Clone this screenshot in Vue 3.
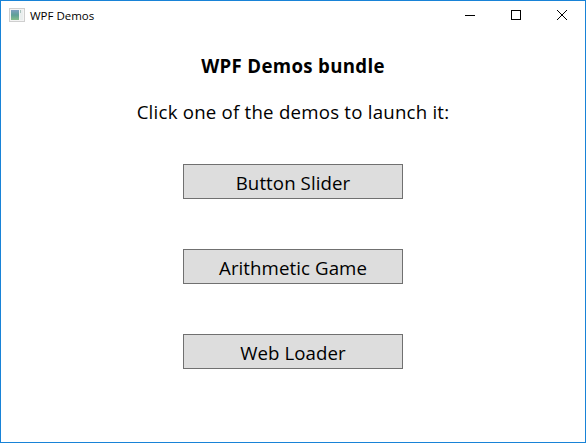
<script setup>
const demos = ['Button Slider', 'Arithmetic Game', 'Web Loader']
</script>

<template>
  <div class="window">
    <header class="titlebar">
      <svg class="app-icon" width="16" height="16" viewBox="0 0 16 16">
        <defs>
          <linearGradient id="pane" x1="0" y1="0" x2="0" y2="1">
            <stop offset="0" stop-color="#7f9fc0" />
            <stop offset="0.5" stop-color="#5f9f98" />
            <stop offset="1" stop-color="#86bd8a" />
          </linearGradient>
        </defs>
        <rect x="0.5" y="0.5" width="15" height="13" fill="#f4f4f4" stroke="#cfcfcf" />
        <rect x="2" y="2" width="8" height="10" fill="url(#pane)" />
        <rect x="11" y="2" width="3" height="10" fill="#e9eeee" />
        <rect x="11" y="2" width="1" height="3" fill="#a9c2bc" />
      </svg>
      <span class="title">WPF Demos</span>
      <div class="controls">
        <div class="control">
          <svg width="46" height="30" viewBox="0 0 46 30"><rect x="18" y="14" width="10" height="1" fill="#000" /></svg>
        </div>
        <div class="control">
          <svg width="46" height="30" viewBox="0 0 46 30"><rect x="18.5" y="9.5" width="9" height="9" fill="none" stroke="#000" /></svg>
        </div>
        <div class="control">
          <svg width="46" height="30" viewBox="0 0 46 30"><path d="M18 9 L28 19 M28 9 L18 19" stroke="#000" stroke-width="1" fill="none" /></svg>
        </div>
      </div>
    </header>
    <main class="content">
      <h1 class="heading">WPF Demos bundle</h1>
      <p class="sub">Click one of the demos to launch it:</p>
      <div class="buttons">
        <button v-for="d in demos" :key="d" class="demo" type="button">{{ d }}</button>
      </div>
    </main>
  </div>
</template>

<style>
html, body { margin: 0; padding: 0; background: #fff; }
</style>

<style scoped>
.window {
  width: 586px;
  height: 443px;
  box-sizing: border-box;
  border: 1px solid #1883d7;
  background: #fff;
  font-family: "Open Sans", "Noto Sans", sans-serif;
  color: #000;
  overflow: hidden;
}
.titlebar {
  display: flex;
  align-items: center;
  height: 30px;
  padding-left: 8px;
}
.app-icon { flex: none; }
.title {
  margin-left: 5px;
  font-size: 11.5px;
  letter-spacing: -0.02px;
  line-height: 30px;
}
.controls { margin-left: auto; display: flex; }
.control { width: 46px; height: 30px; }
.control svg { display: block; }
.content {
  display: flex;
  flex-direction: column;
  align-items: center;
}
.heading {
  margin: 22px 0 0;
  font-size: 18.67px;
  font-weight: 700;
  line-height: 26px;
  letter-spacing: 0.32px;
}
.sub {
  margin: 20px 0 0;
  font-size: 18.67px;
  line-height: 26px;
  letter-spacing: 0.22px;
}
.buttons {
  margin-top: 39px;
  display: flex;
  flex-direction: column;
  gap: 50px;
}
.demo {
  width: 220px;
  height: 35px;
  box-sizing: border-box;
  padding: 1px 0 0;
  border: 1px solid #707070;
  background: #dddddd;
  font-family: inherit;
  font-size: 18.67px;
  letter-spacing: 0.08px;
  color: #000;
}
</style>
